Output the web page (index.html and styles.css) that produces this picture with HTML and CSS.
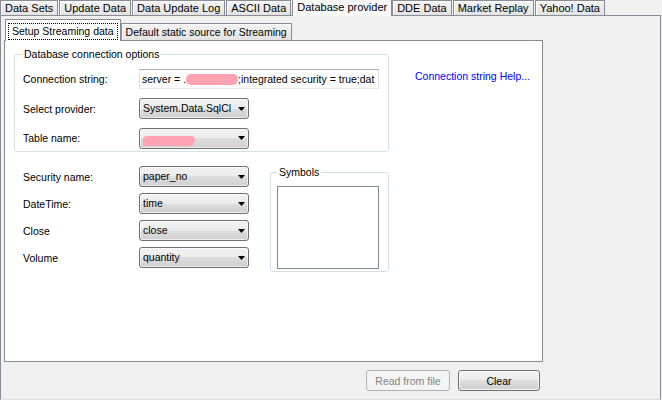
FILE: index.html
```html
<!DOCTYPE html>
<html>
<head>
<meta charset="utf-8">
<link rel="stylesheet" href="styles.css">
</head>
<body>
<div class="window">
  <div class="tabs">
    <div class="tab">Data Sets</div>
    <div class="tab">Update Data</div>
    <div class="tab">Data Update Log</div>
    <div class="tab">ASCII Data</div>
    <div class="tab active">Database provider</div>
    <div class="tab">DDE Data</div>
    <div class="tab">Market Replay</div>
    <div class="tab">Yahoo! Data</div>
  </div>
  <div class="page">
    <div class="subtabs">
      <div class="subtab active"><span class="focus">Setup Streaming data</span></div>
      <div class="subtab">Default static source for Streaming</div>
    </div>
    <div class="panel">
      <div class="toprow">
        <fieldset class="group conn">
          <legend>Database connection options</legend>
          <div class="form conn-form">
            <label class="lbl">Connection string:</label>
            <div class="textbox"><span class="txt">server = .<span class="blot blot-a"></span>;integrated security = true;dat</span></div>
            <label class="lbl">Select provider:</label>
            <div class="combo"><span class="val">System.Data.SqlCl</span><svg class="arrow" width="7" height="4" viewBox="0 0 7 4"><polygon points="0,0 7,0 3.5,4" fill="#000"/></svg></div>
            <label class="lbl">Table name:</label>
            <div class="combo"><span class="val"><span class="blot blot-b"></span></span><svg class="arrow" width="7" height="4" viewBox="0 0 7 4"><polygon points="0,0 7,0 3.5,4" fill="#000"/></svg></div>
          </div>
        </fieldset>
        <a class="help">Connection string Help...</a>
      </div>
      <div class="bottomrow">
        <div class="form fields">
          <label class="lbl">Security name:</label>
          <div class="combo"><span class="val">paper_no</span><svg class="arrow" width="7" height="4" viewBox="0 0 7 4"><polygon points="0,0 7,0 3.5,4" fill="#000"/></svg></div>
          <label class="lbl">DateTime:</label>
          <div class="combo"><span class="val">time</span><svg class="arrow" width="7" height="4" viewBox="0 0 7 4"><polygon points="0,0 7,0 3.5,4" fill="#000"/></svg></div>
          <label class="lbl">Close</label>
          <div class="combo"><span class="val">close</span><svg class="arrow" width="7" height="4" viewBox="0 0 7 4"><polygon points="0,0 7,0 3.5,4" fill="#000"/></svg></div>
          <label class="lbl">Volume</label>
          <div class="combo"><span class="val">quantity</span><svg class="arrow" width="7" height="4" viewBox="0 0 7 4"><polygon points="0,0 7,0 3.5,4" fill="#000"/></svg></div>
        </div>
        <fieldset class="group symbols">
          <legend>Symbols</legend>
          <div class="sym-inner"><div class="listbox"></div></div>
        </fieldset>
      </div>
    </div>
    <div class="buttons">
      <button class="btn disabled" disabled>Read from file</button>
      <button class="btn">Clear</button>
    </div>
  </div>
</div>
</body>
</html>
```

FILE: styles.css
```css
html, body {
  margin: 0;
  padding: 0;
}
body {
  width: 662px;
  height: 400px;
  overflow: hidden;
  background: #f0f0f0;
  font-family: "Liberation Sans", Arial, sans-serif;
  font-size: 11px;
  color: #000;
}
.window {
  display: flex;
  flex-direction: column;
}
.tabs {
  display: flex;
  align-items: flex-start;
  height: 16px;
  margin-bottom: -1px;
  position: relative;
  z-index: 1;
}
.tab {
  box-sizing: border-box;
  height: 15px;
  line-height: 14px;
  padding: 0 4px;
  margin-right: 1px;
  border: 1px solid #898c95;
  border-bottom: none;
  background: linear-gradient(#f3f3f3, #e3e3e3);
  box-shadow: inset 1px 1px 0 #fff;
  white-space: nowrap;
}
.tab.active {
  height: 16px;
  border-top: none;
  line-height: 15px;
  background: #f8f8f8;
  box-shadow: none;
  margin-right: 0;
}
.page {
  box-sizing: border-box;
  width: 661px;
  height: 385px;
  border: 1px solid #898c95;
  border-bottom-color: #dedede;
  padding: 3px 0 0 3px;
  background: #f0f0f0;
}
.subtabs {
  display: flex;
  align-items: flex-end;
  height: 22px;
  margin: 0 0 -1px 1px;
  position: relative;
  z-index: 1;
  font-size: 10.5px;
}
.subtab {
  box-sizing: border-box;
  height: 17px;
  margin-bottom: 1px;
  padding: 0 4px;
  line-height: 16px;
  border: 1px solid #898c95;
  border-bottom: none;
  background: linear-gradient(#f3f3f3, #e3e3e3);
  box-shadow: inset 1px 1px 0 #fff;
  white-space: nowrap;
}
.subtab.active {
  height: 22px;
  margin-bottom: 0;
  padding: 3px 2px 0 2px;
  background: #fff;
  box-shadow: none;
  line-height: 14px;
}
.focus {
  display: block;
  padding: 0 3px 1px 3px;
  border: 1px dotted #000;
}
.panel {
  box-sizing: border-box;
  width: 539px;
  height: 322px;
  border: 1px solid #898c95;
  background: #fff;
  padding: 7px 0 0 9px;
  font-size: 10.5px;
}
.toprow {
  display: flex;
  align-items: flex-start;
}
.group {
  margin: 0;
  padding: 0;
  min-inline-size: 0;
  border: 1px solid #d5dfe5;
  border-radius: 3px;
}
.group legend {
  padding: 0 2px;
  margin-left: 7px;
  line-height: 13px;
}
.conn {
  box-sizing: border-box;
  width: 375px;
}
.form {
  display: grid;
  align-items: center;
}
.conn-form {
  grid-template-columns: 116px 240px;
  grid-template-rows: 20px 20px 20px;
  row-gap: 9.5px;
  padding: 8px 0 3px 8px;
}
.lbl {
  white-space: nowrap;
}
.textbox {
  box-sizing: border-box;
  height: 20px;
  border: 1px solid #e3e9ef;
  border-top-color: #abadb3;
  border-left-color: #dbdfe6;
  border-right-color: #dbdfe6;
  background: #fff;
  overflow: hidden;
  white-space: nowrap;
  line-height: 18px;
  padding-left: 2px;
}
.txt {
  display: inline-block;
}
.blot {
  display: inline-block;
  vertical-align: middle;
  background: #ffa3b3;
  border-radius: 5px;
}
.blot-a {
  width: 52px;
  height: 11px;
  margin: -2px 0 0 0;
}
.blot-b {
  width: 52px;
  height: 10px;
  margin-top: 4px;
  border-radius: 4px 4px 6px 2px;
}
.combo {
  box-sizing: border-box;
  width: 110px;
  height: 21px;
  border: 1px solid #707070;
  border-radius: 3px;
  background: linear-gradient(#f2f2f2 0%, #ebebeb 50%, #dddddd 50%, #cfcfcf 100%);
  box-shadow: inset 0 0 0 1px rgba(255,255,255,0.6);
  display: flex;
  align-items: center;
  justify-content: space-between;
  padding: 0 3px 0 3px;
  white-space: nowrap;
}
.val {
  overflow: hidden;
  line-height: 19px;
}
.arrow {
  flex: none;
}
.help {
  margin: 22px 0 0 26px;
  line-height: 13px;
  color: #0000ff;
  white-space: nowrap;
  cursor: pointer;
}
.bottomrow {
  display: flex;
  align-items: flex-start;
  margin-top: 14px;
}
.fields {
  grid-template-columns: 116px 110px;
  grid-template-rows: repeat(4, 21px);
  row-gap: 6px;
  padding-left: 9px;
}
.symbols {
  box-sizing: border-box;
  width: 119px;
  margin-left: 21px;
}
.symbols legend {
  margin-left: 6px;
}
.sym-inner {
  padding: 7px 0 2px 6px;
}
.listbox {
  box-sizing: border-box;
  width: 102px;
  height: 83px;
  border: 1px solid #828790;
  background: #fff;
}
.buttons {
  display: flex;
  justify-content: flex-end;
  gap: 8px;
  width: 539px;
  box-sizing: border-box;
  padding-right: 3px;
  margin-top: 8px;
}
.btn {
  box-sizing: border-box;
  height: 21px;
  border: 1px solid #707070;
  border-radius: 3px;
  background: linear-gradient(#f2f2f2 0%, #ebebeb 50%, #dddddd 50%, #cfcfcf 100%);
  box-shadow: inset 0 0 0 1px rgba(255,255,255,0.7);
  font-family: "Liberation Sans", Arial, sans-serif;
  font-size: 10.5px;
  color: #000;
  padding: 0;
  width: 82px;
}
.btn.disabled {
  width: 84px;
  border-color: #adb2b5;
  background: #f4f4f4;
  color: #838383;
  box-shadow: none;
}
```
